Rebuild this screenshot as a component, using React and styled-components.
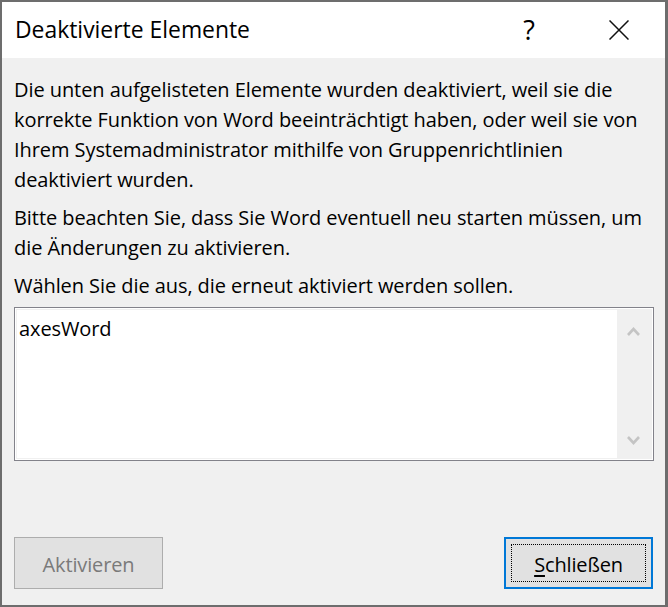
import React from "react";
import styled, { createGlobalStyle } from "styled-components";

const Global = createGlobalStyle`
  html, body { margin: 0; padding: 0; background: #f0f0f0; }
  * { box-sizing: border-box; }
`;
const Dialog = styled.div`
  width: 668px; height: 607px;
  border: solid #6d6d6d; border-width: 2px 3px 2px 2px;
  background: #f0f0f0;
  display: flex; flex-direction: column;
  font-family: "Open Sans", "Noto Sans", sans-serif;
  color: #000;
`;
const TitleBar = styled.header`
  height: 56px; background: #fff; flex: none;
  display: flex; align-items: center;
  padding-left: 13px;
`;
const Title = styled.h1`
  margin: 0; flex: 1; font-weight: 400; font-size: 22.9px; line-height: 56px;
`;
const HelpButton = styled.div`
  width: 20px; margin-right: 70px; text-align: center;
  font-size: 27px; line-height: 56px;
`;
const CloseButton = styled.div`
  display: flex; margin-right: 36px; padding-right: 0;
`;
const Body = styled.main`
  flex: 1; display: flex; flex-direction: column;
  padding: 17px 12px 16px 12px;
`;
const Paragraph = styled.p`
  margin: 0 0 8px; font-size: 20px; line-height: 30px; white-space: pre;
  letter-spacing: -0.07px;
`;
const ListBox = styled.div`
  height: 154px; margin-right: -1px; margin-top: -2px;
  border: 1px solid #82828a; padding: 2px;
  background: #f0f0f0; box-shadow: inset 0 0 0 1px #fff;
  display: flex;
`;
const ListArea = styled.div`
  flex: 1; background: #fff; padding: 4px 0 0 2px;
  font-size: 20px; line-height: 30px; letter-spacing: -0.1px;
`;
const ScrollTrack = styled.div`
  width: 34px; display: flex; flex-direction: column;
  justify-content: space-between; align-items: center;
  padding: 17px 2px 13px 0;
`;
const Footer = styled.footer`
  margin-top: auto; display: flex; justify-content: space-between;
`;
const Button = styled.div`
  width: 149px; height: 52px; background: #e1e1e1;
  border: ${p => (p.$primary ? "2px solid #0078d7" : "1px solid #adadad")};
  color: ${p => (p.$primary ? "#000" : "#7a7a7a")};
  font-size: 20px; letter-spacing: -0.15px;
  display: flex; align-items: center; justify-content: center;
  padding: ${p => (p.$primary ? "5px" : "2px 0 0")};
`;
const FocusRing = styled.span`
  flex: 1; align-self: stretch; border: 1px dotted #000; padding-top: 2px;
  display: flex; align-items: center; justify-content: center;
`;
const Mnemonic = styled.span`
  text-decoration: underline; text-underline-offset: 3px;
`;

const Chevron = ({ up }) => (
  <svg width="13" height="9" viewBox="0 0 13 9" fill="none" stroke="#c4c4c4" strokeWidth="2.6">
    <path d={up ? "M1 8 L6.5 2 L12 8" : "M1 1 L6.5 7 L12 1"} />
  </svg>
);

export default function App() {
  return (
    <>
      <Global />
      <Dialog>
        <TitleBar>
          <Title>Deaktivierte Elemente</Title>
          <HelpButton>?</HelpButton>
          <CloseButton>
            <svg width="20" height="20" viewBox="0 0 20 20" stroke="#111" strokeWidth="1.5" fill="none">
              <path d="M0.5 0.5 L19.5 19.5 M19.5 0.5 L0.5 19.5" />
            </svg>
          </CloseButton>
        </TitleBar>
        <Body>
          <Paragraph>{"Die unten aufgelisteten Elemente wurden deaktiviert, weil sie die\nkorrekte Funktion von Word beeinträchtigt haben, oder weil sie von\nIhrem Systemadministrator mithilfe von Gruppenrichtlinien\ndeaktiviert wurden."}</Paragraph>
          <Paragraph>{"Bitte beachten Sie, dass Sie Word eventuell neu starten müssen, um\ndie Änderungen zu aktivieren."}</Paragraph>
          <Paragraph>Wählen Sie die aus, die erneut aktiviert werden sollen.</Paragraph>
          <ListBox>
            <ListArea>axesWord</ListArea>
            <ScrollTrack>
              <Chevron up />
              <Chevron />
            </ScrollTrack>
          </ListBox>
          <Footer>
            <Button>Aktivieren</Button>
            <Button $primary>
              <FocusRing><span><Mnemonic>S</Mnemonic>chließen</span></FocusRing>
            </Button>
          </Footer>
        </Body>
      </Dialog>
    </>
  );
}
